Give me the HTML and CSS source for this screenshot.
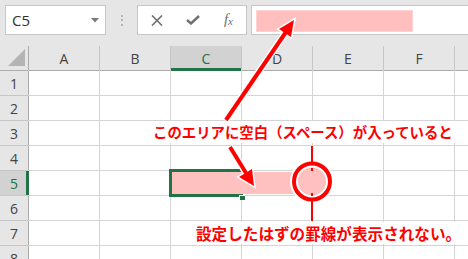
FILE: index.html
```html
<!DOCTYPE html>
<html lang="ja">
<head>
<meta charset="utf-8">
<title>罫線が表示されない</title>
<link rel="stylesheet" href="styles.css">
</head>
<body>

  <div class="toolbar">
    <div class="namebox">
      <span class="cellref">C5</span>
      <svg class="drop" width="8" height="5" viewBox="0 0 8 5"><path d="M0 0H8L4 4.5Z" fill="#7a7a7a"/></svg>
    </div>
    <div class="grip"><i></i><i></i><i></i></div>
    <div class="fbtns">
      <svg class="btn" width="12" height="11" viewBox="0 0 12 11"><path d="M1 0.5L11 10.5M11 0.5L1 10.5" stroke="#6f6f6f" stroke-width="1.6"/></svg>
      <svg class="btn" width="14" height="10" viewBox="0 0 14 10"><path d="M1 5L5 8.5L13 1" fill="none" stroke="#6f6f6f" stroke-width="2.4"/></svg>
      <span class="fx">f<sub>x</sub></span>
    </div>
    <div class="fbar"><div class="fbar-fill"></div></div>
  </div>

  <div class="sheet">
    <div class="corner"></div>
    <div class="colhead">A</div>
    <div class="colhead">B</div>
    <div class="colhead on">C</div>
    <div class="colhead">D</div>
    <div class="colhead">E</div>
    <div class="colhead">F</div>
    <div class="colhead"></div>

    <div class="rowhead">1</div><div></div><div></div><div></div><div></div><div></div><div></div><div></div>
    <div class="rowhead">2</div><div></div><div></div><div></div><div></div><div></div><div></div><div></div>
    <div class="rowhead">3</div><div></div><div></div><div></div><div></div><div></div><div></div><div></div>
    <div class="rowhead">4</div><div></div><div></div><div></div><div></div><div></div><div></div><div></div>
    <div class="rowhead on">5</div><div></div><div></div><div class="sel"></div><div></div><div></div><div></div><div></div>
    <div class="rowhead">6</div><div></div><div></div><div></div><div></div><div></div><div></div><div></div>
    <div class="rowhead">7</div><div></div><div></div><div></div><div></div><div></div><div></div><div></div>
    <div class="rowhead">8</div><div></div><div></div><div></div><div></div><div></div><div></div><div></div>
  </div>

  <!-- annotation layer -->
  <svg class="marks" width="468" height="259" viewBox="0 0 468 259">
    <rect x="172" y="172" width="140" height="22" fill="#ffc0c0"/>
    <g stroke="#fff" stroke-linejoin="miter">
      <line x1="312" y1="146" x2="312" y2="163" stroke-width="4"/>
      <line x1="312" y1="200" x2="312" y2="221" stroke-width="4"/>
      <circle cx="312" cy="181.5" r="18" fill="#ffc0c0" stroke-width="8"/>
      <line x1="226" y1="120" x2="286" y2="32" stroke-width="7"/>
      <polygon points="294,20 291,37 279,29" fill="#fff" stroke-width="3"/>
      <line x1="230" y1="147" x2="246" y2="173" stroke-width="7"/>
      <polygon points="254,186 252,169 239,177" fill="#fff" stroke-width="3"/>
    </g>
    <g fill="#ff0000" stroke="#ff0000">
      <line x1="312" y1="146" x2="312" y2="164" stroke-width="2"/>
      <line x1="312" y1="199" x2="312" y2="221" stroke-width="2"/>
      <line x1="312" y1="168" x2="312" y2="171" stroke-width="2"/>
      <line x1="312" y1="193" x2="312" y2="196" stroke-width="2"/>
      <circle cx="312" cy="181.5" r="18" fill="none" stroke-width="4"/>
      <line x1="226" y1="120" x2="286" y2="32" stroke-width="4"/>
      <polygon points="294,20 291,37 279,29" stroke="none"/>
      <line x1="230" y1="147" x2="246" y2="173" stroke-width="4"/>
      <polygon points="254,186 252,169 239,177" stroke="none"/>
    </g>
  </svg>

  <p class="note note-top">このエリアに空白（スペース）が入っていると</p>
  <p class="note note-bottom">設定したはずの罫線が表示されない。</p>

</body>
</html>
```

FILE: styles.css
```css
html {
    height: 100%;
}

body {
    margin: 0;
    padding: 0;
    background: #e6e6e6;
    font-family: "Open Sans", "Noto Sans", sans-serif;
    color: #444;
    width: 468px;
    height: 259px;
    overflow: hidden;
    position: relative;
}

/* formula bar row */

.toolbar {
    height: 46px;
    box-sizing: border-box;
    padding: 5px 0 0 5px;
    display: flex;
    align-items: flex-start;
}

.namebox {
    width: 101px;
    height: 30px;
    box-sizing: border-box;
    background: #fff;
    border: 1px solid #c6c6c6;
    display: flex;
    align-items: center;
    justify-content: space-between;
    padding: 0 6px 0 6px;
}

.cellref {
    font-size: 15px;
    color: #333;
}

.drop {
    margin-top: 1px;
}

.grip {
    width: 31px;
    height: 30px;
    display: flex;
    flex-direction: column;
    align-items: center;
    justify-content: center;
    gap: 2.5px;
}

    .grip i {
        width: 2px;
        height: 2px;
        background: #b3b3b3;
    }

.fbtns {
    width: 110px;
    height: 30px;
    box-sizing: border-box;
    background: #fff;
    border: 1px solid #c6c6c6;
    display: flex;
    align-items: center;
    justify-content: space-between;
    padding: 0 13px 0 13px;
}

.fx {
    font: italic 15px "Liberation Serif", serif;
    color: #6f6f6f;
    margin-top: -2px;
}

    .fx sub {
        font-size: 11px;
        vertical-align: -1px;
    }

.fbar {
    flex: 1;
    height: 30px;
    margin-left: 4px;
    margin-right: -2px;
    box-sizing: border-box;
    background: #fff;
    border: 1px solid #c6c6c6;
    padding: 4px 0 0 4px;
}

.fbar-fill {
    width: 157px;
    height: 22px;
    box-sizing: border-box;
    background: #ffbfbf;
    border: 1px solid #ffd3d3;
}

/* worksheet grid */

.sheet {
    display: grid;
    grid-template-columns: 28px repeat(6, 70px) 1fr;
    grid-auto-rows: 24px;
    gap: 1px;
    background: #d4d4d4;
}

    .sheet > div {
        background: #fff;
    }

    .sheet > .corner {
        background: #e6e6e6;
        position: relative;
        box-shadow: 1px 0 0 #ababab, 0 1px 0 #ababab;
    }

        .corner::after {
            content: "";
            position: absolute;
            left: 8px;
            top: 3px;
            width: 17px;
            height: 17px;
            background: #b4b4b4;
            clip-path: polygon(100% 0, 100% 100%, 0 100%);
        }

    .sheet > .colhead {
        background: #e6e6e6;
        display: flex;
        align-items: center;
        justify-content: center;
        font-size: 14px;
        color: #444;
        box-shadow: 1px 0 0 #c6c6c6, 0 1px 0 #ababab;
    }

    .sheet > .colhead.on {
        background: #d2d2d2;
        color: #217346;
        box-shadow: inset 0 -2px 0 #217346, 0 1px 0 #217346, 1px 0 0 #c6c6c6;
    }

    .sheet > .rowhead {
        background: #e6e6e6;
        display: flex;
        align-items: center;
        justify-content: center;
        font-size: 14px;
        color: #444;
        box-shadow: 1px 0 0 #ababab, 0 1px 0 #c6c6c6;
    }

    .sheet > .rowhead.on {
        background: #d2d2d2;
        color: #217346;
        box-shadow: inset -2px 0 0 #217346, 1px 0 0 #217346, 0 1px 0 #c6c6c6;
    }

    .sheet > .sel {
        position: relative;
        outline: 3px solid #217346;
        outline-offset: -1px;
        z-index: 1;
    }

        .sel::after {
            content: "";
            position: absolute;
            right: -4px;
            bottom: -5px;
            width: 5px;
            height: 4px;
            background: #217346;
            border-left: 1px solid #fff;
            border-top: 1px solid #fff;
        }

/* annotations */

.marks {
    position: absolute;
    left: 0;
    top: 0;
    z-index: 2;
}

.note {
    position: absolute;
    z-index: 3;
    margin: 0;
    padding: 3px 3px;
    background: #fff;
    color: #ff0000;
    font-family: "Noto Sans CJK JP", sans-serif;
    font-weight: bold;
    line-height: 16px;
    white-space: nowrap;
}

.note-top {
    left: 150px;
    top: 121px;
    font-size: 14.4px;
}

.note-bottom {
    left: 193px;
    top: 222px;
    font-size: 15.6px;
}
```
